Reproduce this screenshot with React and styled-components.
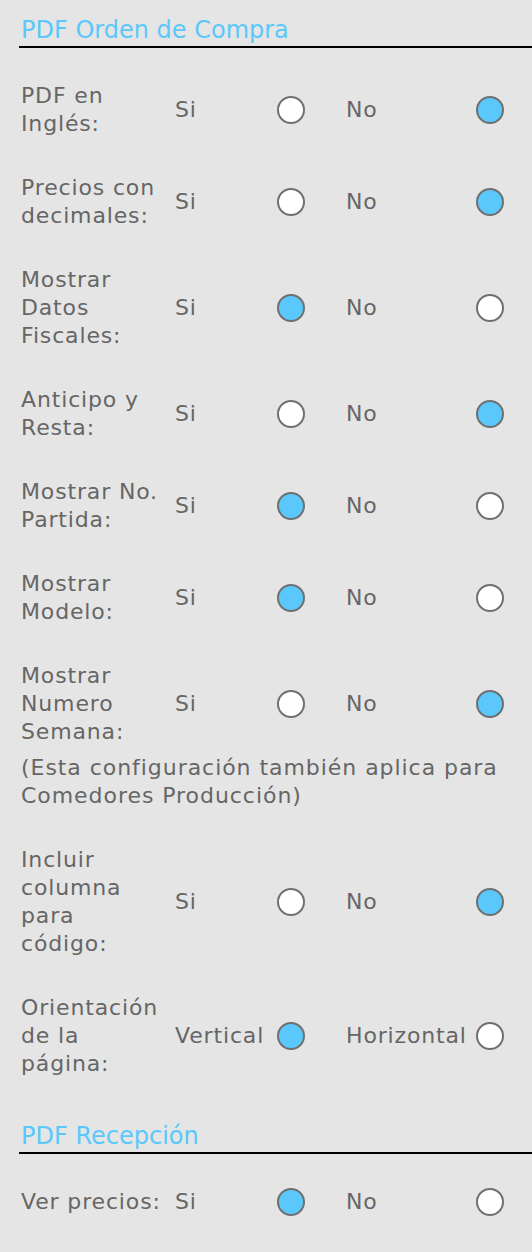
import React from "react";
import styled, { createGlobalStyle } from "styled-components";

const GlobalStyle = createGlobalStyle`
  html, body {
    margin: 0;
    padding: 0;
    background: #e5e5e5;
  }
  body {
    font-family: "DejaVu Sans", "Liberation Sans", sans-serif;
    color: #666666;
  }
`;

const Page = styled.div`
  padding: 16px 0 40px 19px;
  box-sizing: border-box;
  width: 532px;
`;

const Section = styled.section`
  display: flex;
  flex-direction: column;

  & + & {
    margin-top: 26px;
  }
`;

const Heading = styled.h2`
  margin: 0;
  padding: 0 0 2px 2px;
  font-size: 24px;
  font-weight: normal;
  line-height: 28px;
  color: #5ac8fa;
  border-bottom: 2px solid #000;
`;

const Rows = styled.div`
  display: flex;
  flex-direction: column;
  padding-top: 16px;
`;

const Item = styled.div`
  display: flex;
  flex-direction: column;
  gap: 8px;
  padding: 18px 0;
`;

const Row = styled.div`
  display: grid;
  grid-template-columns: 154px 102px 28px 41px 130px 28px;
  align-items: center;
  padding-left: 2px;
  font-size: 22px;
  line-height: 28px;
  letter-spacing: 0.85px;
`;

const Label = styled.div`
  padding-right: 12px;
`;

const Option = styled.span`
  white-space: nowrap;
`;

const Spacer = styled.span``;

const Radio = styled.span`
  box-sizing: border-box;
  width: 28px;
  height: 28px;
  border-radius: 50%;
  border: 2px solid #707070;
  background: ${(p) => (p.$checked ? "#5ac8fa" : "#ffffff")};
`;

const Note = styled.div`
  padding-left: 2px;
  font-size: 22px;
  line-height: 28px;
  letter-spacing: 0.95px;
`;

const orden = [
  { label: "PDF en Inglés:", value: "no" },
  { label: "Precios con decimales:", value: "no" },
  { label: "Mostrar Datos Fiscales:", value: "si" },
  { label: "Anticipo y Resta:", value: "no" },
  { label: "Mostrar No. Partida:", value: "si" },
  { label: "Mostrar Modelo:", value: "si" },
  {
    label: "Mostrar Numero Semana:",
    value: "no",
    note: "(Esta configuración también aplica para Comedores Producción)",
  },
  { label: "Incluir columna para código:", value: "no" },
  {
    label: "Orientación de la página:",
    value: "si",
    yes: "Vertical",
    no: "Horizontal",
  },
];

const recepcion = [{ label: "Ver precios:", value: "si" }];

function SettingRow({ label, value, yes = "Si", no = "No", note }) {
  return (
    <Item>
      <Row>
        <Label>{label}</Label>
        <Option>{yes}</Option>
        <Radio $checked={value === "si"} />
        <Spacer />
        <Option>{no}</Option>
        <Radio $checked={value === "no"} />
      </Row>
      {note && <Note>{note}</Note>}
    </Item>
  );
}

export default function App() {
  return (
    <>
      <GlobalStyle />
      <Page>
        <Section>
          <Heading>PDF Orden de Compra</Heading>
          <Rows>
            {orden.map((r) => (
              <SettingRow key={r.label} {...r} />
            ))}
          </Rows>
        </Section>
        <Section>
          <Heading>PDF Recepción</Heading>
          <Rows>
            {recepcion.map((r) => (
              <SettingRow key={r.label} {...r} />
            ))}
          </Rows>
        </Section>
      </Page>
    </>
  );
}
